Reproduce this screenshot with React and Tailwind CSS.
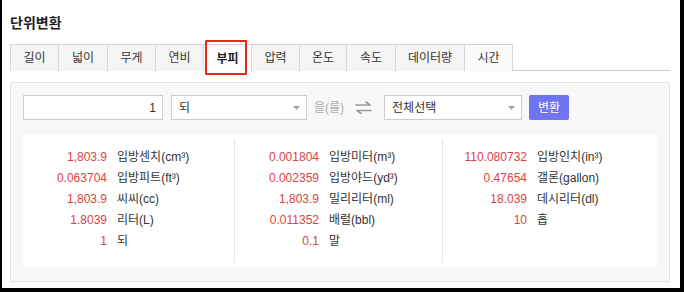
import React from "react";

const tabs = [
  { name: "길이", w: "w-[49px]" },
  { name: "넓이", w: "w-[49px]" },
  { name: "무게", w: "w-[48px]" },
  { name: "연비", w: "w-[48px]" },
  { name: "부피", w: "w-[48px]", active: true },
  { name: "압력", w: "w-[48px]" },
  { name: "온도", w: "w-[47px]" },
  { name: "속도", w: "w-[49px]" },
  { name: "데이터량", w: "w-[69px]" },
  { name: "시간", w: "w-[48px]", light: true },
];

const cols = [
  [
    ["1,803.9", "입방센치(cm³)"],
    ["0.063704", "입방피트(ft³)"],
    ["1,803.9", "씨씨(cc)"],
    ["1.8039", "리터(L)"],
    ["1", "되"],
  ],
  [
    ["0.001804", "입방미터(m³)"],
    ["0.002359", "입방야드(yd³)"],
    ["1,803.9", "밀리리터(ml)"],
    ["0.011352", "배럴(bbl)"],
    ["0.1", "말"],
  ],
  [
    ["110.080732", "입방인치(in³)"],
    ["0.47654", "갤론(gallon)"],
    ["18.039", "데시리터(dl)"],
    ["10", "홉"],
  ],
];

function Caret() {
  return (
    <svg width="7" height="4" viewBox="0 0 7 4" className="shrink-0">
      <path d="M0 0 L7 0 L3.5 4 Z" fill="#a0a0a0" />
    </svg>
  );
}

function Swap() {
  return (
    <svg width="17" height="13" viewBox="0 0 17 13">
      <path d="M1 4 H15 M11 1 L15 4" stroke="#9a9a9a" strokeWidth="1.6" fill="none" strokeLinecap="round" />
      <path d="M16 9.5 H2 M6 12.5 L2 9.5" stroke="#9a9a9a" strokeWidth="1.6" fill="none" strokeLinecap="round" />
    </svg>
  );
}

export default function App() {
  return (
    <div
      className="w-[684px] h-[292px] box-border bg-white border-l-[2px] border-r-[4px] border-b-[4px] border-black pl-[8px] pr-[10px] text-[#333]"
      style={{ fontFamily: '"Liberation Sans", "Noto Sans CJK KR", sans-serif' }}
    >
      <div className="h-[44px] pt-[13px] text-[14px] font-bold leading-[20px] text-[#222]">단위변환</div>

      <div className="flex h-[27px] border-b border-[#cfcfcf]">
        {tabs.map((t, i) => (
          <div
            key={t.name}
            className={`relative ${t.w} h-[27px] box-border flex items-center justify-center text-[12px] border-t border-r border-[#d6d6d6] ${
              i === 0 ? "border-l" : ""
            } ${t.active ? "bg-white font-bold text-[#222] h-[28px] z-10" : t.light ? "bg-[#fbfbfb]" : "bg-[#f5f5f5]"}`}
          >
            {t.name}
            {t.active && (
              <div className="absolute left-[1px] top-[-5px] w-[42px] h-[35px] border-[2px] border-[#e8281c] rounded-[1px]" />
            )}
          </div>
        ))}
      </div>

      <div className="mt-[11px] h-[200px] box-border border border-[#e3e3e3] bg-[#f8f8f8] px-[12px] pt-[12px] pb-[14px] flex flex-col">
        <div className="flex items-center h-[25px]">
          <div className="w-[140px] h-[25px] box-border border border-[#cccccc] bg-white flex items-center justify-end pr-[6px] text-[12px]">
            1
          </div>
          <div className="ml-[8px] w-[136px] h-[25px] box-border border border-[#cccccc] bg-white flex items-center justify-between pl-[7px] pr-[6px] text-[12px]">
            <span>되</span>
            <Caret />
          </div>
          <span className="ml-[7px] text-[12px] text-[#aaaaaa]">을(를)</span>
          <span className="ml-[11px] flex items-center">
            <Swap />
          </span>
          <div className="ml-[12px] w-[138px] h-[25px] box-border border border-[#cccccc] bg-white flex items-center justify-between pl-[7px] pr-[6px] text-[12px]">
            <span>전체선택</span>
            <Caret />
          </div>
          <div className="ml-[7px] w-[40px] h-[25px] rounded-[2px] bg-[#7174f0] text-white text-[12px] flex items-center justify-center">
            변환
          </div>
        </div>

        <div className="mt-[15px] flex-1 bg-white flex py-[4px]">
          {cols.map((col, ci) => (
            <div
              key={ci}
              className={`${ci === 0 ? "w-[211px]" : ci === 1 ? "w-[209px] border-l border-r border-[#e6e6e6]" : "flex-1"} pt-[7px] pb-[6px]`}
            >
              {col.map(([n, l]) => (
                <div key={l} className="flex h-[21px] items-center text-[12px]">
                  <span className="w-[84px] text-right text-[#d9443f] shrink-0">{n}</span>
                  <span className="ml-[10px] text-[#333]">{l}</span>
                </div>
              ))}
            </div>
          ))}
        </div>
      </div>
    </div>
  );
}
